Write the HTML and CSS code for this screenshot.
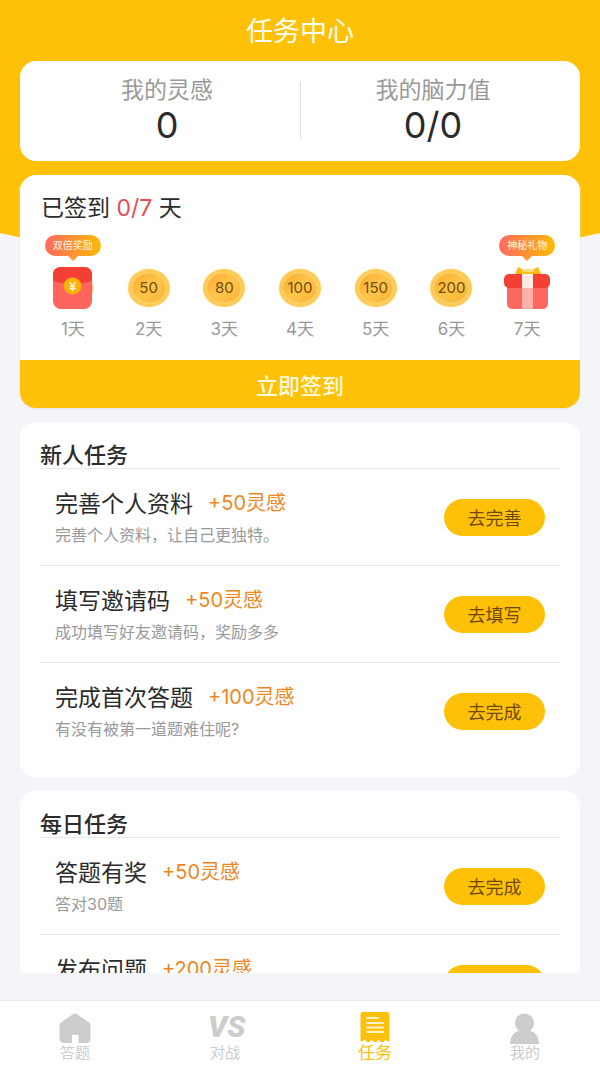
FILE: index.html
```html
<!DOCTYPE html>
<html lang="zh-CN">
<head>
<meta charset="utf-8">
<meta name="viewport" content="width=device-width, initial-scale=1">
<title>任务中心</title>
<link rel="stylesheet" href="styles.css">
</head>
<body>
<div class="app">
  <main class="content">
    <h1 class="page-title">任务中心</h1>

    <section class="card stats">
      <div class="stat"><span class="stat-label">我的灵感</span><span class="stat-value">0</span></div>
      <div class="stat"><span class="stat-label">我的脑力值</span><span class="stat-value">0/0</span></div>
    </section>

    <section class="card signin">
      <h2 class="signin-title">已签到 <span class="signin-count">0/7</span> 天</h2>
      <ol class="days">
        <li class="day">
          <span class="bubble">双倍奖励</span>
          <span class="prize">
            <svg width="42" height="44" viewBox="0 0 42 44" aria-hidden="true">
              <path d="M2 16Q-1 22 2 28ZM40 16Q43 22 40 28Z" fill="#ffc48a"/>
              <rect x="1" y="1" width="39" height="42" rx="8" fill="#ff655c"/>
              <path d="M1 15V9Q1 1 9 1H32Q40 1 40 9V15Q31 18 20.500 18T1 15Z" fill="#f43f35"/>
              <ellipse cx="20.500" cy="20" rx="9" ry="8.500" fill="#fbb106"/>
              <path d="M17.500 16L20.500 20L23.500 16M20.500 20V25M17.500 20.500H23.500M17.500 22.800H23.500" fill="none" stroke="#fff5d8" stroke-width="1.400"/>
            </svg>
          </span>
          <span class="day-label">1天</span>
        </li>
        <li class="day"><span class="prize"><span class="coin">50</span></span><span class="day-label">2天</span></li>
        <li class="day"><span class="prize"><span class="coin">80</span></span><span class="day-label">3天</span></li>
        <li class="day"><span class="prize"><span class="coin">100</span></span><span class="day-label">4天</span></li>
        <li class="day"><span class="prize"><span class="coin">150</span></span><span class="day-label">5天</span></li>
        <li class="day"><span class="prize"><span class="coin">200</span></span><span class="day-label">6天</span></li>
        <li class="day">
          <span class="bubble">神秘礼物</span>
          <span class="prize">
            <svg width="48" height="44" viewBox="0 0 48 44" aria-hidden="true">
              <path d="M11 10L15 1L21 4H29L35 1L39 10Z" fill="#fbb90c"/>
              <path d="M18 5Q25 0 32 5Q25 8 18 5Z" fill="#ffdc7c"/>
              <path d="M4 20H45V37Q45 43 39 43H10Q4 43 4 37Z" fill="#fd675d"/>
              <rect x="1" y="8" width="46" height="14" rx="5" fill="#f43f35"/>
              <rect x="19" y="8" width="11" height="14" fill="#ffeae6"/>
              <rect x="19" y="22" width="11" height="21" fill="#ffb1aa"/>
            </svg>
          </span>
          <span class="day-label">7天</span>
        </li>
      </ol>
      <button class="signin-button" type="button">立即签到</button>
    </section>

    <section class="card tasks">
      <h2 class="tasks-title">新人任务</h2>
      <ul class="task-list">
        <li class="task">
          <div class="task-text"><h3 class="task-name">完善个人资料<span class="reward">+50灵感</span></h3><p class="task-note">完善个人资料，让自己更独特。</p></div>
          <button class="task-button" type="button">去完善</button>
        </li>
        <li class="task">
          <div class="task-text"><h3 class="task-name">填写邀请码<span class="reward">+50灵感</span></h3><p class="task-note">成功填写好友邀请码，奖励多多</p></div>
          <button class="task-button" type="button">去填写</button>
        </li>
        <li class="task">
          <div class="task-text"><h3 class="task-name">完成首次答题<span class="reward">+100灵感</span></h3><p class="task-note">有没有被第一道题难住呢?</p></div>
          <button class="task-button" type="button">去完成</button>
        </li>
      </ul>
    </section>

    <section class="card tasks">
      <h2 class="tasks-title">每日任务</h2>
      <ul class="task-list">
        <li class="task">
          <div class="task-text"><h3 class="task-name">答题有奖<span class="reward">+50灵感</span></h3><p class="task-note">答对30题</p></div>
          <button class="task-button" type="button">去完成</button>
        </li>
        <li class="task">
          <div class="task-text"><h3 class="task-name">发布问题<span class="reward">+200灵感</span></h3></div>
          <button class="task-button" type="button" aria-label="发布问题"></button>
        </li>
      </ul>
    </section>
  </main>

  <nav class="tabs">
    <a class="tab" href="#answer">
      <svg class="tab-icon" viewBox="0 0 34 34" aria-hidden="true"><path d="M14.500 4.500Q17 2.500 19.500 4.500L31 12.500Q32.500 13.500 32.500 15.500V28Q32.500 33 28 33H20.500V25H14V33H6.500Q1.500 33 1.500 28V15.500Q1.500 13.500 3 12.500Z" fill="currentColor"/></svg>
      <span>答题</span>
    </a>
    <a class="tab" href="#battle">
      <span class="tab-icon versus">VS</span>
      <span>对战</span>
    </a>
    <a class="tab tab-active" href="#tasks" aria-current="page">
      <svg class="tab-icon" viewBox="0 0 34 34" aria-hidden="true"><path d="M2.500 4Q2.500 2 4.500 2H29.500Q31.500 2 31.500 4V31.500Q29 32 27.500 29.500Q25.500 33 23.500 32Q22 32 20.500 29.500Q18.500 33 17 32Q15 32 13.500 29.500Q11.500 33 10 32Q8.500 32 6.500 29.500Q5 32 2.500 31.500Z" fill="currentColor"/><path d="M9 8H20M9 13H25M9 17.500H25M9 22H25" stroke="#fff3c8" stroke-width="2" stroke-linecap="round"/></svg>
      <span>任务</span>
    </a>
    <a class="tab" href="#mine">
      <svg class="tab-icon" viewBox="0 0 34 34" aria-hidden="true"><circle cx="16.500" cy="13" r="9.500" fill="currentColor"/><path d="M2 34Q2 24 11 20.500H22Q31 24 31 34Z" fill="currentColor"/></svg>
      <span>我的</span>
    </a>
  </nav>
</div>
</body>
</html>
```

FILE: styles.css
```css
* { box-sizing: border-box; }

body {
  margin: 0;
  background: #f4f5f8;
  color: #2b2b2b;
  font-family: Inter, "Noto Sans CJK SC", sans-serif;
}

h1, h2, h3, p, ol, ul { margin: 0; padding: 0; font-weight: 400; }
ol, ul { list-style: none; }
button { border: 0; padding: 0; font-family: inherit; cursor: pointer; }

.app {
  position: relative;
  display: flex;
  flex-direction: column;
  gap: 28px;
  height: 100vh;
}

.app::before {
  content: "";
  position: absolute;
  inset: 0 0 auto;
  height: 300px;
  background: #ffc107;
  clip-path: polygon(0 0, 100% 0, 100% 233px, 50% 100%, 0 233px);
}

.content {
  position: relative;
  flex: 1;
  min-height: 0;
  overflow: hidden;
  display: flex;
  flex-direction: column;
  gap: 14px;
  padding: 0 20px;
}

.content > * { flex-shrink: 0; }

.page-title {
  height: 47px;
  padding-top: 16px;
  color: #fffef0;
  font-size: 27px;
  line-height: 32px;
  text-align: center;
}

.card { background: #fff; border-radius: 16px; }

.stats {
  display: grid;
  grid-template-columns: 1fr 1fr;
  padding: 14px 0 16px;
}

.stat {
  display: flex;
  flex-direction: column;
  align-items: center;
  padding-left: 14px;
}

.stat + .stat {
  padding: 0 14px 0 0;
  background: linear-gradient(#ddd, #ddd) 0 7px / 1px 57px no-repeat;
}

.stat-label { color: #999; font-size: 23px; line-height: 30px; }
.stat-value { font-size: 36px; line-height: 40px; }

.signin { overflow: hidden; box-shadow: 0 1px 2px #e0e0e4; }

.signin-title { padding: 17px 21px 11px; font-size: 23px; line-height: 32px; }
.signin-count { color: #e84c55; }

.days {
  display: grid;
  grid-template-columns: repeat(7, 1fr);
  padding: 0 15px 19px;
}

.day {
  display: grid;
  grid-template-rows: 31px 44px 31px;
  justify-items: center;
}

.bubble {
  position: relative;
  align-self: start;
  width: 56px;
  border-radius: 11px;
  background: linear-gradient(90deg, #ff6960, #ffba08);
  color: #fff9e8;
  font-size: 10px;
  line-height: 21px;
  text-align: center;
}

.bubble::after {
  content: "";
  position: absolute;
  top: 100%;
  left: 50%;
  margin-left: -5px;
  border: 5px solid transparent;
  border-top-color: #ff983a;
  border-bottom: 0;
}

.prize { grid-row: 2; display: grid; place-items: center; }

.coin {
  display: grid;
  place-items: center;
  width: 42px;
  height: 38px;
  border: 4px solid #fdcb58;
  border-radius: 50%;
  background: linear-gradient(135deg, #fcb63a 20%, #fec54b 50%, #fcb93d 80%);
  background-clip: padding-box;
  box-shadow: 0 0 2px #fde3a0;
  color: #754b08;
  font-size: 15px;
  line-height: 20px;
}

.day-label {
  grid-row: 3;
  align-self: end;
  color: #999;
  font-size: 17px;
  line-height: 24px;
}

.signin-button {
  display: block;
  width: 100%;
  height: 48px;
  background: #ffc107;
  color: #fffbe0;
  font-size: 22px;
  font-weight: 500;
}

.tasks { padding: 20px 20px 17px; }

.tasks-title {
  border-bottom: 1px solid #e8e8e8;
  font-size: 22px;
  font-weight: 500;
  line-height: 26px;
}

.task {
  display: flex;
  align-items: center;
  justify-content: space-between;
  height: 97px;
  padding: 0 15px;
  border-bottom: 1px solid #e8e8e8;
}

.task:last-child { border-bottom-color: transparent; }

.task-text { align-self: start; padding-top: 19px; }

.task-name {
  display: flex;
  gap: 15px;
  font-size: 23px;
  line-height: 32px;
}

.reward { color: #ef8621; font-size: 20px; line-height: 30px; }
.task-note { padding-top: 3px; color: #999; font-size: 16px; line-height: 24px; }

.task-button {
  width: 101px;
  height: 37px;
  border-radius: 19px;
  background: #ffc107;
  color: #6f4905;
  font-size: 18px;
}

.tabs {
  position: relative;
  display: grid;
  grid-template-columns: repeat(4, 1fr);
  height: 66px;
  background: #fff;
  box-shadow: 0 -1px 2px #e9e9ec;
}

.tab {
  display: flex;
  flex-direction: column;
  align-items: center;
  padding-top: 9px;
  color: #ccc;
  font-size: 15px;
  line-height: 18px;
  text-decoration: none;
}

.tab-active { color: #fbc00b; font-size: 17px; }
.tab-icon { width: 34px; height: 34px; }

.versus {
  display: grid;
  place-items: center;
  font-family: Roboto, sans-serif;
  font-size: 30px;
  font-style: italic;
  font-weight: 900;
  line-height: 34px;
}
```
